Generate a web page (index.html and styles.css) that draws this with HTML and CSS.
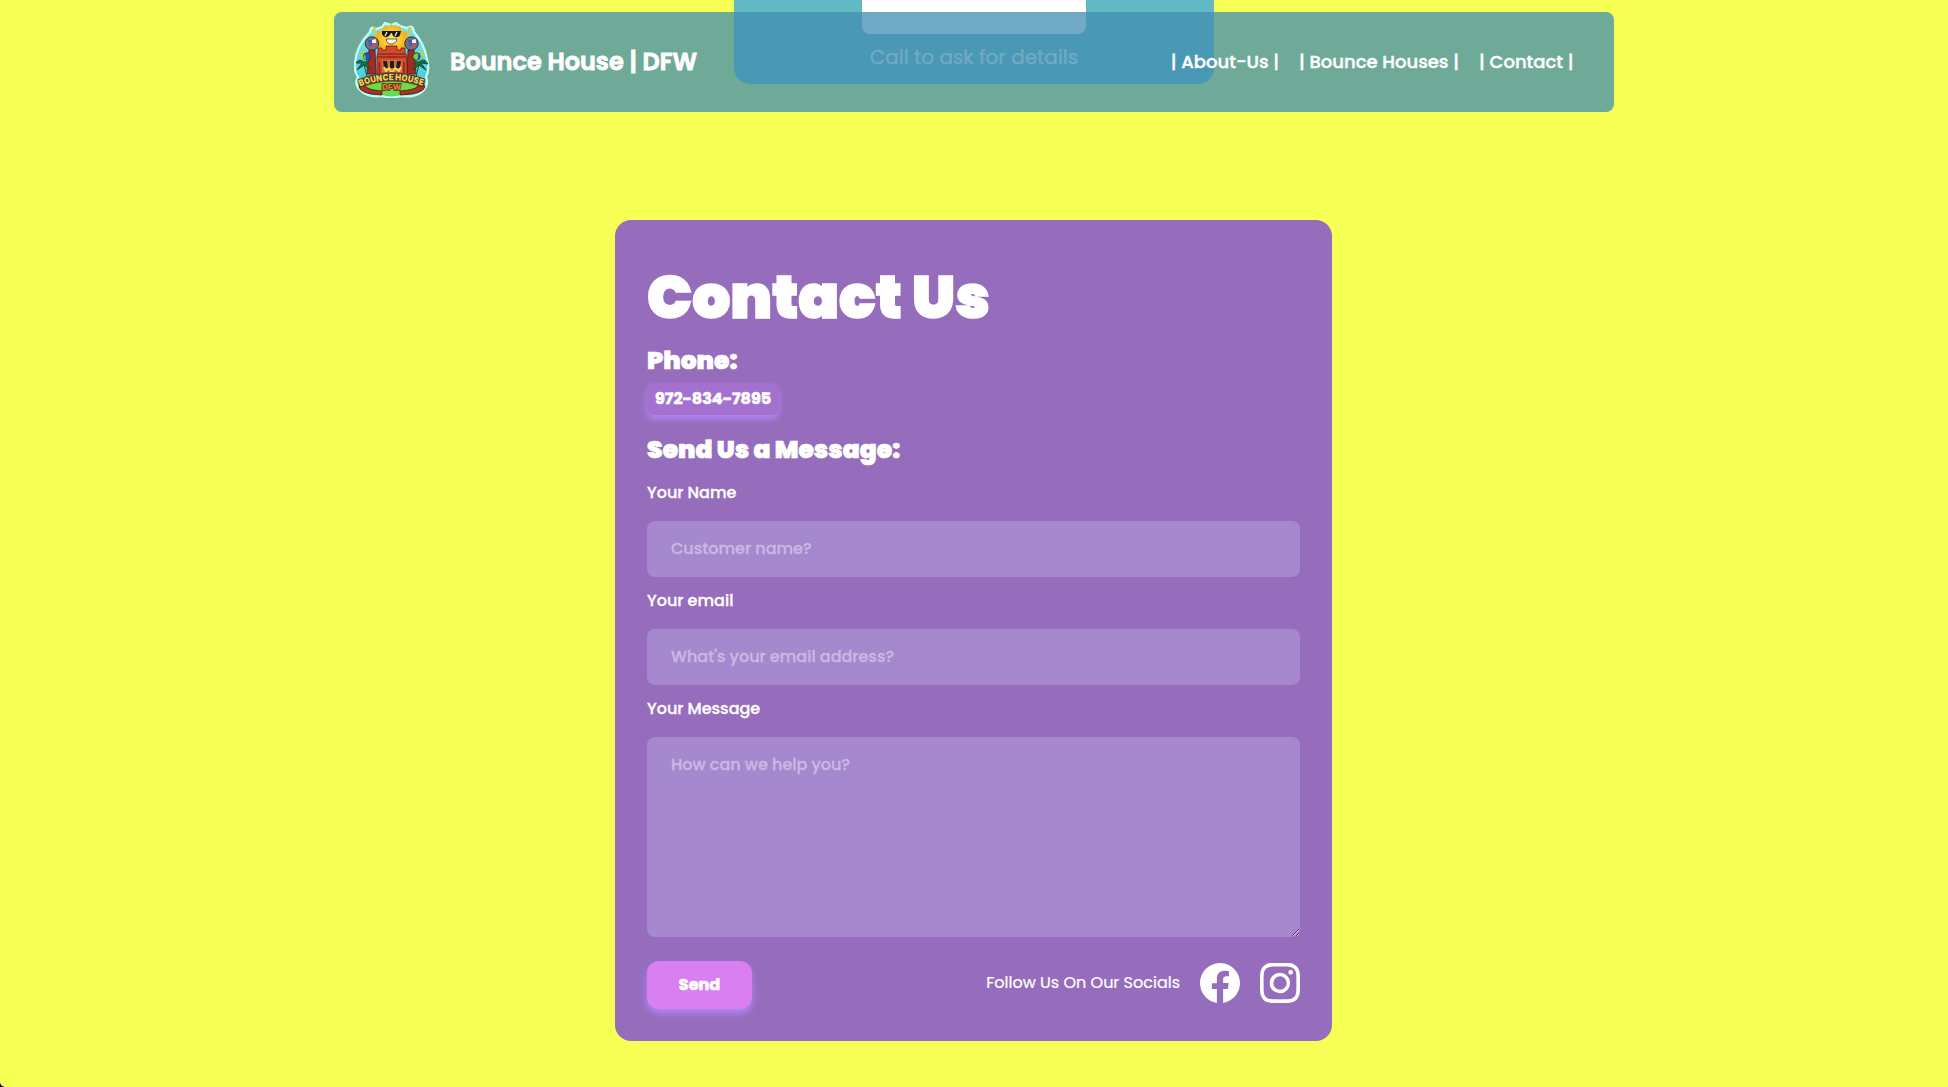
FILE: index.html
```html
<!DOCTYPE html>
<html lang="en">
<head>
<meta charset="utf-8">
<title>Bounce House | DFW</title>
<link rel="stylesheet" href="styles.css">
</head>
<body>
<div class="page">
  <section class="rental-card">
    <div class="rental-photo"></div>
    <p class="rental-note">Call to ask for details</p>
  </section>

  <nav class="navbar">
    <a class="brand" href="#">
      <svg class="logo" viewBox="0 0 76 76" aria-label="Bounce House DFW logo">
        <defs>
          <path id="arc" d="M6 64.500Q38 52 70.500 64.500"/>
          <linearGradient id="sky" x2="0" y2="1"><stop stop-color="#79e4ec"/><stop offset="1" stop-color="#36c8e0"/></linearGradient>
          <radialGradient id="sun"><stop stop-color="#ffe96a"/><stop offset="1" stop-color="#f7b61c"/></radialGradient>
        </defs>
        <path d="M22 7Q17 3 16 10Q2 24 1 41Q0 50 4 55Q0 62 6 68Q14 76 28 74Q37 77 47 74Q62 76 69 69Q75 62 72 55Q76 48 73 37Q70 21 60 10Q59 2 53 6L46 4L42 1L37 3L31 1L28 5Z" fill="url(#sky)" stroke="#c9fff3" stroke-width="2.2"/>
        <path d="M20 5L22 15L17 17M56 5L54 15L59 17M11 29L6 34M66 29L70 34" fill="none" stroke="#f0c02c" stroke-width="2.5" stroke-dasharray="3 1"/>
        <path d="M37 2L41 6L46 4L48 9L53 10L52 16L55 21L51 24L48 29L27 29L22 24L20 19L23 14L23 9L28 9L30 4L34 6Z" fill="#f4ad1b"/>
        <circle cx="37.5" cy="17" r="13.5" fill="url(#sun)"/>
        <path d="M28 9H47L46 13Q44 17 39 14L38 11H37L35 14Q30 17 28 12Z" fill="#151515"/>
        <path d="M31 14L33 10M41 14L43 10" stroke="#d8edf0" stroke-width="1.4"/>
        <path d="M32 17H43Q42 22 37 22Q33 22 32 17" fill="#fff" stroke="#5b3210" stroke-width=".8"/>
        <path d="M15 28H21L22 52H13ZM54 28H60L62 52H53Z" fill="#a52b21" stroke="#4b171a" stroke-width=".8"/>
        <g stroke="#322e45"><circle cx="18" cy="21.5" r="6.7" fill="#77717d"/><circle cx="57.5" cy="21.5" r="6.7" fill="#77717d"/></g>
        <path d="M14 18H18V24H15ZM54 18H58V24H55Z" fill="#3e5fc0"/><path d="M18 18L22 17V21H18ZM58 18L62 17V21H58Z" fill="#eee"/><path d="M18 21H22L20 25H18ZM58 21H62L60 25H58Z" fill="#d94351"/>
        <path d="M24 30V26H28V28H32V24H43V28H47V26H51V30L53 35V58H23V35Z" fill="#d8482a" stroke="#641c1a" stroke-width=".8"/>
        <path d="M24 32H51M23 35H52M25.500 40V56M50 40V56" stroke="#8f2a1e" stroke-width="1.600"/>
        <path d="M28 38H48V56H28Z" fill="#d9733a"/>
        <path d="M29 39H33L34 46H30ZM36 39H40V46H36ZM43 39H47L46 46H42Z" fill="#211d22"/>
        <path d="M30 45L32 49L35 46L38 51L41 46L45 49L47 45" fill="none" stroke="#f8d054" stroke-width="2"/>
        <path d="M10 40Q5 36 2 41L8 41L3 48L10 43L16 48L13 41Q17 39 10 40M10 42L13 55M65 40Q70 35 74 42L67 41L72 48L65 43L59 48L62 41Q57 39 65 40M65 42L62 55" fill="#226f3e" stroke="#194b33"/>
        <circle cx="13" cy="34.5" r="3.7" fill="#294fc3" stroke="#264034"/><path d="M11 32Q7 36 12 38Z" fill="#62d637"/>
        <circle cx="62.5" cy="34.5" r="3.7" fill="#68d838" stroke="#264034"/><path d="M64 32Q68 35 64 38Z" fill="#294fc3"/>
        <path d="M13 60Q37 52 62 60L64 71Q38 76 12 71Z" fill="#6cdd3c"/>
        <path d="M5 57Q38 43 71 57L70 66Q38 53 6 66Z" fill="#6b4a42"/>
        <path d="M5 64Q5 72 28 73V69Q14 68 11 64ZM71 64Q71 72 46 73V69Q61 68 64 64Z" fill="#a83426" stroke="#42191c" stroke-width=".8"/>
        <text class="logo-arc"><textPath href="#arc" textLength="64" lengthAdjust="spacingAndGlyphs">BOUNCE HOUSE</textPath></text>
        <text class="logo-dfw" x="37.5" y="67.5">DFW</text>
      </svg>
      <span class="brand-name">Bounce House | DFW</span>
    </a>
    <div class="links">
      <a href="#">| About-Us |</a>
      <a href="#">| Bounce Houses |</a>
      <a href="#">| Contact |</a>
    </div>
  </nav>

  <main class="contact">
    <h1>Contact Us</h1>
    <h2>Phone:</h2>
    <a class="phone" href="#">972-834-7895</a>
    <h2 class="send-title">Send Us a Message:</h2>
    <form>
      <label><span>Your Name</span><input type="text" placeholder="Customer name?"></label>
      <label><span>Your email</span><input type="text" placeholder="What's your email address?"></label>
      <label><span>Your Message</span><textarea placeholder="How can we help you?"></textarea></label>
      <div class="actions">
        <button type="button">Send</button>
        <div class="socials">
          <span class="follow">Follow Us On Our Socials</span>
          <svg viewBox="0 0 16 16"><path d="M16 8.049c0-4.446-3.582-8.05-8-8.05C3.58 0-.002 3.603-.002 8.05c0 4.017 2.926 7.347 6.75 7.951v-5.625h-2.03V8.05H6.75V6.275c0-2.017 1.195-3.131 3.022-3.131.876 0 1.791.157 1.791.157v1.98h-1.009c-.993 0-1.303.621-1.303 1.258v1.51h2.218l-.354 2.326H9.25V16c3.824-.604 6.75-3.934 6.75-7.951"/></svg>
          <svg viewBox="0 0 16 16"><path d="M8 0C5.829 0 5.556.01 4.703.048 3.85.088 3.269.222 2.76.42a3.9 3.9 0 0 0-1.417.923A3.9 3.9 0 0 0 .42 2.76C.222 3.268.087 3.85.048 4.7.01 5.555 0 5.827 0 8.001c0 2.172.01 2.444.048 3.297.04.852.174 1.433.372 1.942.205.526.478.972.923 1.417.444.445.89.719 1.416.923.51.198 1.09.333 1.942.372C5.555 15.99 5.827 16 8 16s2.444-.01 3.298-.048c.851-.04 1.434-.174 1.943-.372a3.9 3.9 0 0 0 1.416-.923c.445-.445.718-.891.923-1.417.197-.509.332-1.09.372-1.942C15.99 10.445 16 10.173 16 8s-.01-2.445-.048-3.299c-.04-.851-.175-1.433-.372-1.941a3.9 3.9 0 0 0-.923-1.417A3.9 3.9 0 0 0 13.24.42c-.51-.198-1.092-.333-1.943-.372C10.443.01 10.172 0 7.998 0zm-.717 1.442h.718c2.136 0 2.389.007 3.232.046.78.035 1.204.166 1.486.275.373.145.64.319.92.599s.453.546.598.92c.11.281.24.705.275 1.485.039.843.047 1.096.047 3.231s-.008 2.389-.047 3.232c-.035.78-.166 1.203-.275 1.485a2.5 2.5 0 0 1-.599.919c-.28.28-.546.453-.92.598-.28.11-.704.24-1.485.276-.843.038-1.096.047-3.232.047s-2.39-.009-3.233-.047c-.78-.036-1.203-.166-1.485-.276a2.5 2.5 0 0 1-.92-.598 2.5 2.5 0 0 1-.6-.92c-.109-.281-.24-.705-.275-1.485-.038-.843-.046-1.096-.046-3.233s.008-2.388.046-3.231c.036-.78.166-1.204.276-1.486.145-.373.319-.64.599-.92s.546-.453.92-.598c.282-.11.705-.24 1.485-.276.738-.034 1.024-.044 2.515-.045zm4.988 1.328a.96.96 0 1 0 0 1.92.96.96 0 0 0 0-1.92m-4.27 1.122a4.109 4.109 0 1 0 0 8.217 4.109 4.109 0 0 0 0-8.217m0 1.441a2.667 2.667 0 1 1 0 5.334 2.667 2.667 0 0 1 0-5.334"/></svg>
        </div>
      </div>
    </form>
  </main>
</div>
</body>
</html>
```
FILE: styles.css
```css
* { box-sizing: border-box; margin: 0; }
html { background: #000; }
body { height: 1087px; overflow: hidden; font-family: Poppins, Inter, sans-serif; color: #fff; -webkit-text-stroke: .2px; }
.page { position: relative; height: 1087px; display: flex; flex-direction: column; align-items: center; background: #f6ff53; border-radius: 0 0 0 5px; }
a { color: inherit; text-decoration: none; white-space: nowrap; }
.rental-card { width: 480px; height: 84px; display: flex; flex-direction: column; align-items: center; background: #62b9c3; border-radius: 0 0 16px 16px; }
.rental-photo { width: 224px; height: 34px; background: #fff; border-radius: 0 0 8px 8px; }
.rental-note { margin-top: 8px; font-size: 20px; line-height: 30px; white-space: nowrap; }

.navbar { position: absolute; top: 12px; left: 334px; width: 1280px; height: 100px; padding: 0 40.5px 2px 20px; display: flex; align-items: center; justify-content: space-between; background: rgba(65, 142, 176, .75); border-radius: 8px; }
.brand { display: flex; align-items: center; gap: 20px; }
.logo { width: 76px; height: 76px; margin-top: -3px; -webkit-text-stroke: 0; }
.logo-arc, .logo-dfw { font: 900 9px Inter, sans-serif; paint-order: stroke; stroke: #3a2422; stroke-width: 1.4px; }
.logo-arc { fill: #f4cf4f; }
.logo-dfw { fill: #e7762e; font-size: 8px; text-anchor: middle; }
.brand-name { font-size: 24px; font-weight: 600; -webkit-text-stroke-width: .8px; }
.links { display: flex; gap: 20px; font-size: 18px; font-weight: 500; -webkit-text-stroke-width: .4px; }

.contact { width: 717px; height: 821px; margin: 136px 1px 0 0; padding: 40px 32px 32px; background: #966dbd; border-radius: 16px; }
h1 { font-size: 60px; line-height: 74px; font-weight: 900; -webkit-text-stroke-width: 1.6px; }
h2 { font-size: 25px; line-height: 36px; font-weight: 900; margin-top: 9px; -webkit-text-stroke-width: .6px; }
.phone { display: flex; width: 132px; height: 32px; margin-top: 4px; padding: 0 8px; line-height: 31px; font-weight: 700; font-size: 16px; background: #a471ce; border-radius: 8px; box-shadow: 0 4px 6px #b585f5; -webkit-text-stroke-width: .6px; }
.send-title { margin-top: 17px; }
form { margin-top: 11px; font-size: 16px; font-weight: 500; }
label { display: block; height: 108px; line-height: 28px; }
label > span { -webkit-text-stroke-width: .3px; }
input, textarea { display: block; width: 100%; height: 56px; margin-top: 14px; padding: 13px 24px 15px; border: 0; border-radius: 8px; background: #a688cf; font: inherit; color: #fff; }
textarea { height: 200px; padding-top: 14px; resize: vertical; }
::placeholder { color: #cbb8e2; -webkit-text-stroke: .3px; }
.actions { display: flex; justify-content: space-between; margin-top: 158px; }
button { width: 105px; height: 48px; padding: 0 0 1px; border: 0; border-radius: 12px; background: #d97ff1; color: #fff; font: inherit; font-weight: 700; box-shadow: 0 4px 6px #b585f5; -webkit-text-stroke: .6px; }
.socials { display: flex; gap: 20px; margin-top: 2px; line-height: 40px; font-weight: 400; }
.socials svg { width: 40px; height: 40px; fill: #fff; }
```
